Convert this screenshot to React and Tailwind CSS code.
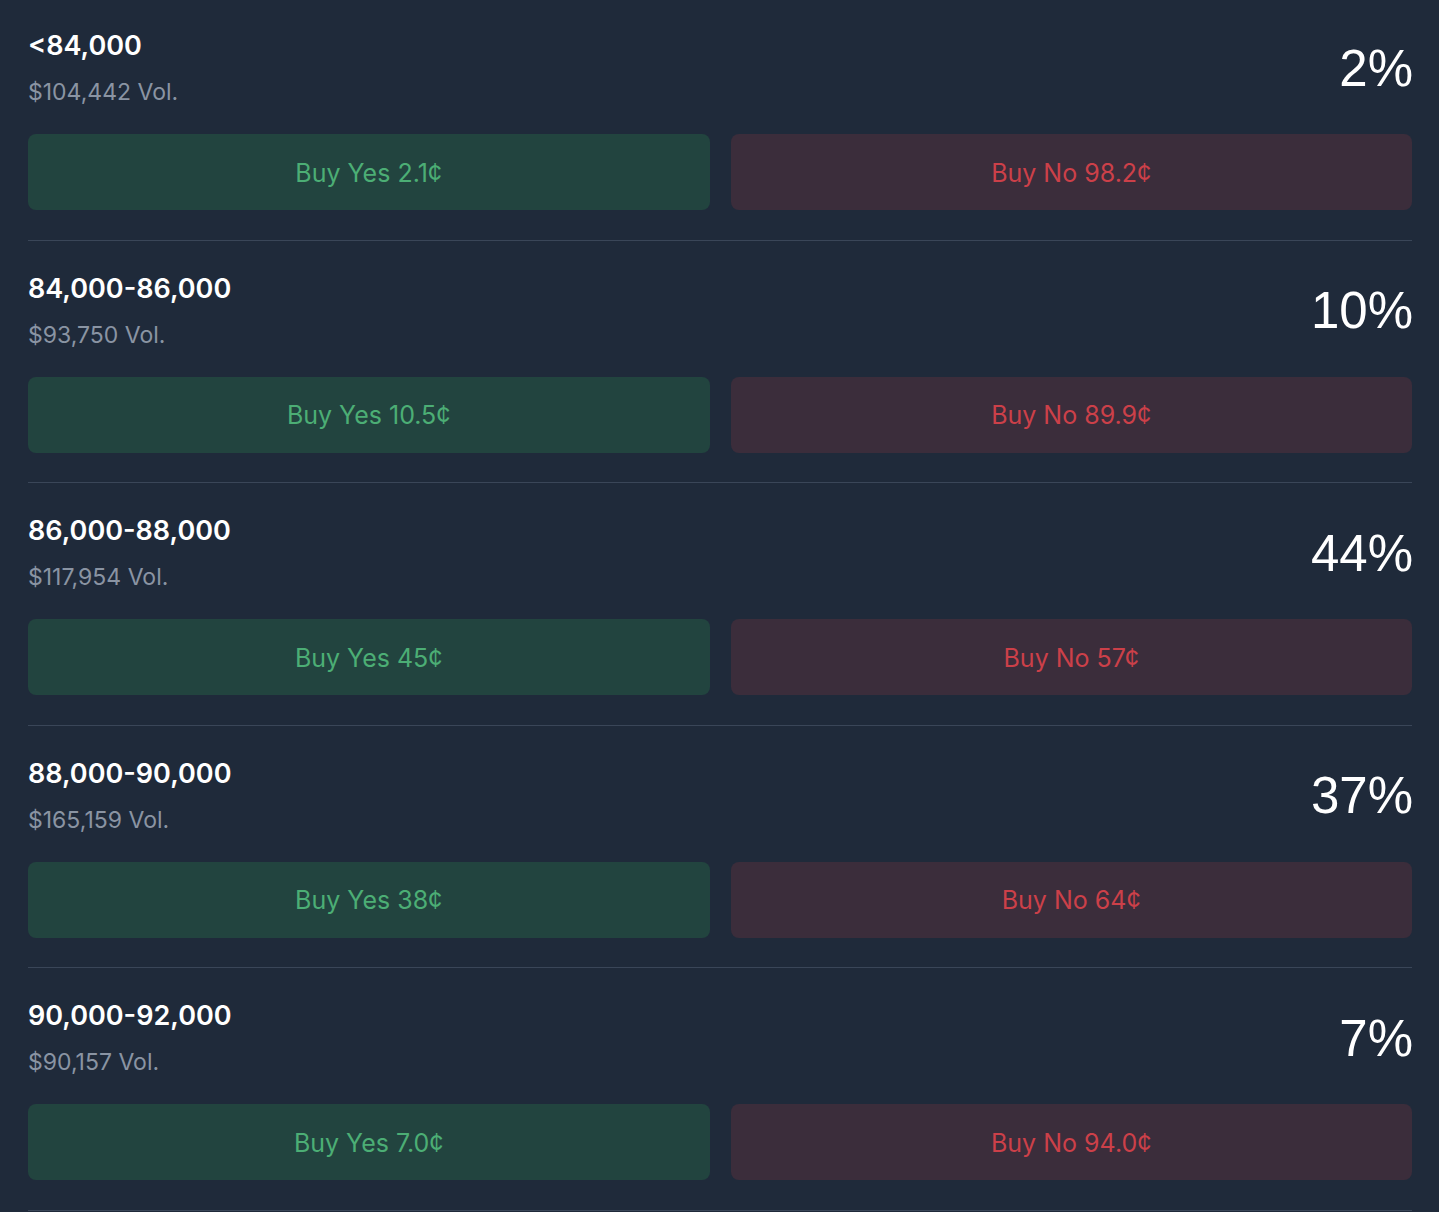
import React from "react";

const markets = [
  { range: "<84,000", vol: "$104,442", pct: "2%", yes: "2.1¢", no: "98.2¢" },
  { range: "84,000-86,000", vol: "$93,750", pct: "10%", yes: "10.5¢", no: "89.9¢" },
  { range: "86,000-88,000", vol: "$117,954", pct: "44%", yes: "45¢", no: "57¢" },
  { range: "88,000-90,000", vol: "$165,159", pct: "37%", yes: "38¢", no: "64¢" },
  { range: "90,000-92,000", vol: "$90,157", pct: "7%", yes: "7.0¢", no: "94.0¢" },
];

const MarketRow = ({ market }) => {
  return (
    <div className="pt-[32px] pb-[29.5px] border-b border-[#3a4658]">
      <div className="flex items-center justify-between">
        <div>
          <h3 className="text-[27px] leading-[32px] font-semibold text-white">{market.range}</h3>
          <p className="mt-[16px] text-[23px] leading-[28px] text-[#8a94a3]">{market.vol} Vol.</p>
        </div>
        <div className="font-['Liberation_Sans',sans-serif] text-[51px] leading-none text-white -mr-[1px]">
          {market.pct}
        </div>
      </div>
      <div className="mt-[28px] grid grid-cols-2 gap-[21px]">
        <button className="h-[76px] pt-[3px] rounded-lg bg-[#22443f] text-[25px] text-[#4cae75]">
          Buy Yes {market.yes}
        </button>
        <button className="h-[76px] pt-[3px] rounded-lg bg-[#3b2d3b] text-[25px] text-[#cc4049]">
          Buy No {market.no}
        </button>
      </div>
    </div>
  );
};

export default function App() {
  return (
    <div
      className="min-h-screen bg-[#1f2a3a] overflow-hidden"
      style={{ fontFamily: "Inter, 'Noto Sans', sans-serif" }}
    >
      <div className="pl-[28px] pr-[27px] -mt-[2px]">
        {markets.map((m) => (
          <MarketRow key={m.range} market={m} />
        ))}
      </div>
    </div>
  );
}
